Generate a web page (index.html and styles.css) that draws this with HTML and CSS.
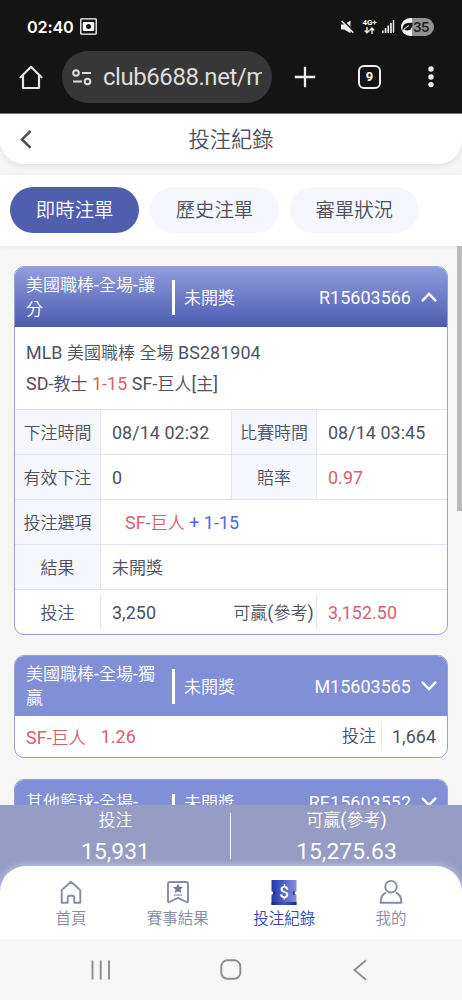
FILE: index.html
```html
<!DOCTYPE html>
<html lang="zh-Hant">
<head>
<meta charset="utf-8">
<title>投注紀錄</title>
<link rel="stylesheet" href="styles.css">
</head>
<body>
<div class="phone">
  <div class="chrome">
    <div class="status">
      <span class="clock">02:40</span>
      <svg class="rec" width="17" height="17" viewBox="0 0 17 17"><rect x=".8" y=".8" width="15.4" height="15.4" rx=".8" fill="none" stroke="#fff" stroke-width="1.3"/><path d="M4 4h9q1.2 0 1.2 1.2v6.6Q14.200 13 13 13H4q-1.200 0-1.200-1.200V5.200Q2.800 4 4 4z" fill="#fff"/><circle cx="8.500" cy="8.500" r="2.500" fill="#141414"/></svg>
      <span class="grow"></span>
      <svg class="mute" width="13" height="14" viewBox="0 0 13 14"><path d="M0 4.500h3.200L9.500.5v12.800L3.200 9.500H0z" fill="#eee"/><path d="M1.800.4l11 10.500" stroke="#141414" stroke-width="1.600"/><path d="M.6 1l11.700 11.700" stroke="#eee" stroke-width="1.600"/></svg>
      <span class="net"><b>4G+</b><svg width="11" height="7" viewBox="0 0 11 7" fill="none" stroke="#eee" stroke-width="1.400"><path d="M3 0v5.700M.7 3.400L3 5.800l2.300-2.400M8 7V1.200M5.700 3.500L8 1.100l2.300 2.400"/></svg></span>
      <svg class="signal" width="13" height="13" viewBox="0 0 13 13" fill="#eee"><path d="M0 10.500h1.700V13H0zM2.700 8h1.700v5H2.700zM5.400 5.500h1.700V13H5.400zM8.100 3h1.700v10H8.100zM10.800 0h1.400v13h-1.400z"/></svg>
      <span class="battery"><svg width="11" height="10" viewBox="0 0 12 10"><path d="M.5 9.500Q0 3 4 1.300 7 0 11.500.5 11.500 8 7 8.600 4 9 2 8z" fill="#141414"/><path d="M.8 9.500Q3 5.500 7.500 3.600" fill="none" stroke="#fff" stroke-width="1"/></svg><b>35</b></span>
    </div>
    <div class="toolbar">
      <svg class="home" width="24" height="25" viewBox="0 0 24 25" fill="none" stroke="#e6e6e6" stroke-width="2.200" stroke-linejoin="round" stroke-linecap="round"><path d="M1.500 12.300L12 1.800l10.500 10.500M4 10.500V23h16V10.500"/></svg>
      <div class="address">
        <svg width="20" height="17" viewBox="0 0 20 17" fill="none" stroke="#ddd" stroke-width="2"><circle cx="4" cy="4" r="2.800"/><path d="M10 4h9M1 12.500h9"/><circle cx="15.500" cy="12.500" r="2.800"/></svg>
        <span>club6688.net/m</span>
      </div>
      <svg class="plus" width="22" height="22" viewBox="0 0 22 22" stroke="#eee" stroke-width="2.300"><path d="M11 .8v20.400M.8 11h20.400"/></svg>
      <span class="count">9</span>
      <svg class="dots" width="6" height="22" viewBox="0 0 6 22" fill="#eee"><circle cx="3" cy="3" r="2.700"/><circle cx="3" cy="11" r="2.700"/><circle cx="3" cy="18.600" r="2.700"/></svg>
    </div>
  </div>

  <header class="title-bar">
    <svg width="12" height="19" viewBox="0 0 12 19" fill="none" stroke="#4a4d5c" stroke-width="2.500"><path d="M10.600 1L2 9.400l8.600 8.500"/></svg>
    <h1>投注紀錄</h1>
  </header>

  <div class="tabs">
    <span class="tab on">即時注單</span><span class="tab">歷史注單</span><span class="tab">審單狀況</span>
  </div>

  <main class="list">
    <section class="card open">
      <div class="head"><div class="game">美國職棒<i>-</i>全場<i>-</i>讓分</div><div class="state">未開獎</div><i class="id">R15603566</i>
        <svg width="16" height="12" viewBox="0 0 16 12" fill="none" stroke="#fff" stroke-width="2.400"><path d="M1 10.200L8 3l7 7.200"/></svg></div>
      <div class="match"><p><i>MLB </i>美國職棒<i> </i>全場<i> BS281904</i></p><p><i>SD-</i>教士<i> <em>1-15</em> SF-</i>巨人<i>[</i>主<i>]</i></p></div>
      <div class="row four"><span class="key">下注時間</span><i class="val">08/14 02:32</i><span class="key">比賽時間</span><i class="val">08/14 03:45</i></div>
      <div class="row four"><span class="key">有效下注</span><i class="val">0</i><span class="key">賠率</span><i class="val red">0.97</i></div>
      <div class="row"><span class="key">投注選項</span><span class="val pick"><em><i>SF-</i>巨人</em><i class="blue"> + 1-15</i></span></div>
      <div class="row"><span class="key">結果</span><span class="val">未開獎</span></div>
      <div class="row four total"><span class="key">投注</span><i class="val">3,250</i><span class="key">可贏<i>(</i>參考<i>)</i></span><i class="val red">3,152.50</i></div>
    </section>

    <section class="card">
      <div class="head"><div class="game">美國職棒<i>-</i>全場<i>-</i>獨贏</div><div class="state">未開獎</div><i class="id">M15603565</i>
        <svg width="16" height="12" viewBox="0 0 16 12" fill="none" stroke="#fff" stroke-width="2.400"><path d="M1 1.800L8 9l7-7.200"/></svg></div>
      <div class="brief"><em><i>SF-</i>巨人</em><i class="odds">1.26</i><span class="stake">投注</span><i class="amount">1,664</i></div>
    </section>

    <section class="card">
      <div class="head single"><div class="game">其他籃球<i>-</i>全場<i>-</i></div><div class="state">未開獎</div><i class="id">RE15603552</i>
        <svg width="16" height="12" viewBox="0 0 16 12" fill="none" stroke="#fff" stroke-width="2.400"><path d="M1 1.800L8 9l7-7.200"/></svg></div>
    </section>
    <div class="scrollbar"></div>
  </main>

  <footer class="bottom">
    <div class="summary">
      <div><span>投注</span><i>15,931</i></div>
      <div><span>可贏<i class="paren">(</i>參考<i class="paren">)</i></span><i>15,275.63</i></div>
    </div>
    <nav class="nav">
      <a><svg width="26" height="26" viewBox="0 0 26 26" fill="none" stroke="#858ca6" stroke-width="1.900" stroke-linejoin="round"><path d="M3.700 11.100L13 2.700l9.300 8.400v12.600h-6v-5q0-2-2-2h-2.600q-2 0-2 2v5h-6z"/></svg>首頁</a>
      <a><svg width="26" height="26" viewBox="0 0 26 26" fill="none" stroke="#858ca6" stroke-width="1.900" stroke-linejoin="round"><path d="M5 3h16q2 0 2 2v17q0 1.700-1.500 1L13 18.800 4.500 23q-1.500.7-1.500-1V5q0-2 2-2z"/><path d="M13 4.500l1.500 3.200 3.600.4-2.600 2.400.7 3.600-3.200-1.800-3.200 1.800.7-3.600-2.600-2.400 3.600-.4z" fill="#747c9c" stroke="none"/><path d="M9 16h8" stroke-width="1.200"/></svg>賽事結果</a>
      <a class="on"><svg width="26" height="26" viewBox="0 0 26 26"><defs><linearGradient id="tk"><stop stop-color="#2437ad"/><stop offset="1" stop-color="#8090dc"/></linearGradient><linearGradient id="edge"><stop stop-color="#17267f"/><stop offset=".5" stop-color="#4258c4"/><stop offset="1" stop-color="#17267f"/></linearGradient></defs><path d="M.5 1h25v11.200a1.800 1.800 0 0 0 0 3.600V26H.5v-10.200a1.800 1.800 0 0 0 0-3.600z" fill="url(#tk)"/><path d="M.5 23h25v3H.5z" fill="url(#edge)"/><path d="M2.500 12.200q2.400 1.800 0 3.600M23.500 12.200q-2.400 1.800 0 3.600" stroke="#17267f" stroke-width="1.300" fill="none"/><text x="13" y="19.200" text-anchor="middle" class="dollar">$</text></svg>投注紀錄</a>
      <a><svg width="26" height="26" viewBox="0 0 26 26" fill="none" stroke="#858ca6" stroke-width="1.900" stroke-linejoin="round"><circle cx="13" cy="7.700" r="5.800"/><path d="M8.200 13.600Q2.600 15.500 2.600 23.800h20.800q0-8.300-5.600-10.200"/></svg>我的</a>
    </nav>
  </footer>

  <div class="system">
    <svg width="20" height="20" viewBox="0 0 20 20" stroke="#8d8d8d" stroke-width="1.900"><path d="M1.500 .5v19M9.700 .5v19M18 .5v19"/></svg>
    <svg class="square" width="22" height="22" viewBox="0 0 22 22" fill="none" stroke="#8d8d8d" stroke-width="1.900"><rect x="1.300" y="1.300" width="19" height="18.500" rx="6"/></svg>
    <svg width="14" height="22" viewBox="0 0 14 22" fill="none" stroke="#8d8d8d" stroke-width="1.900"><path d="M13 1.200L1.400 11 13 20.800"/></svg>
  </div>
</div>
</body>
</html>
```
FILE: styles.css
```css
* { box-sizing: border-box; }
body {
  margin: 0;
  font-family: Roboto, "Noto Sans CJK TC", sans-serif;
  font-size: 17px;
  font-weight: 350;
  color: #4e515e;
}
i, em { font-style: normal; }
i { font-size: 17.9px; font-weight: 380; letter-spacing: .06px; white-space: pre; }
em, .red { color: #d5616f; }
.blue { color: #4d67e5; }
p, h1 { margin: 0; font-weight: inherit; }
svg { display: block; flex: none; }

.phone { width: 462px; height: 1000px; display: flex; flex-direction: column; background: #f6f6f6; overflow: hidden; }

.chrome { flex: none; height: 114px; background: #141414; border-bottom: 1px solid #777; color: #fff; }
.status { display: flex; align-items: center; height: 51px; padding: 2px 28px 0 27px; }
.clock { font: 600 16.3px/20px Inter, sans-serif; letter-spacing: -.2px; width: 46px; white-space: nowrap; }
.rec { margin-left: 7px; }
.grow { flex: 1; }
.mute { margin-right: 2px; }
.net { display: flex; flex-direction: column; align-items: center; width: 15px; margin: 0 5px 0 6px; }
.net b { font: 700 8px/8px Roboto, sans-serif; letter-spacing: -.2px; }
.battery { display: flex; align-items: center; width: 33px; height: 18px; margin-left: 6px; padding-left: 1px; border-radius: 9px; background: linear-gradient(90deg, #f3f3f3 11px, #929292 11px); color: #202020; }
.battery b { font: 600 13.5px/18px Inter, sans-serif; letter-spacing: -.6px; }
.toolbar { display: flex; align-items: center; height: 52px; padding-left: 19px; }
.address { display: flex; align-items: center; width: 210px; height: 52px; margin-left: 19px; padding-left: 10px; border-radius: 26px; background: #373737; color: #ddd; }
.address span { margin-left: 11px; width: 159px; overflow: hidden; font: 400 24px/32px Roboto, sans-serif; letter-spacing: -.45px; white-space: nowrap; }
.plus { margin-left: 22px; }
.count { width: 23px; height: 24px; margin-left: 42px; border: 2px solid #eee; border-radius: 6px; font: 700 13px/20px Roboto, sans-serif; text-align: center; }
.dots { margin-left: 47px; }

.title-bar { flex: none; display: flex; align-items: center; height: 50px; padding-left: 20px; background: #fff; border-radius: 0 0 24px 24px; box-shadow: 0 2px 7px rgba(0, 0, 0, .09); }
.title-bar h1 { flex: 1; margin-right: 32px; padding-top: 2px; font-size: 21.3px; line-height: 30px; text-align: center; }

.tabs { flex: none; display: flex; gap: 10.5px; height: 71px; margin-top: 11px; padding: 12px 10px; background: #fff; box-shadow: 0 1px 5px rgba(0, 0, 0, .07); }
.tab { width: 129.3px; height: 46px; border-radius: 23px; background: #f6f7fd; font-size: 19.4px; line-height: 47px; text-align: center; }
.tab.on { background: #505eae; color: #fff; }

.list { position: relative; flex: none; height: 559px; padding: 20px 14px 0; overflow: hidden; }
.scrollbar { position: absolute; right: 0; top: 0; width: 5px; height: 265px; background: #bababa; }
.card { width: 434px; margin-bottom: 21px; border: 1px solid #99a2cf; border-radius: 10px; background: #fff; overflow: hidden; }
.card.open { margin-bottom: 20px; }
.head { display: flex; align-items: center; height: 60px; padding: 0 10px 0 11px; background: #818fd6; color: #fff; }
.open .head { background: linear-gradient(#929dde, #4b5baf); }
.game { flex: none; width: 146px; padding-right: 12px; line-height: 24.5px; }
.state { flex: none; height: 35px; padding-left: 9px; border-left: 3px solid #fff; line-height: 36px; }
.single { height: 44px; }
.single .state { height: 17px; line-height: 18px; }
.id { flex: 1; text-align: right; margin-right: 10px; }
.match { height: 82px; padding: 10px 11px; }
.match p { height: 31px; line-height: 31px; }

.row { display: grid; grid-template-columns: 86px 1fr; grid-template-rows: 44px; height: 45px; border-top: 1px solid #dfe2f4; line-height: 45px; }
.row.four { grid-template-columns: 86px 130px 86px 1fr; }
.key { height: 44px; background: #f6f7fd; border-right: 1px solid #dfe2f4; line-height: 46px; text-align: center; white-space: nowrap; }
.val { padding-left: 11px; }
span.val { line-height: 46px; }
.four .val + .key { border-left: 1px solid #dfe2f4; }
.pick { padding-left: 24px; }
.total .key { background: none; height: 36px; margin-top: 4px; line-height: 38px; }
.four.total .val + .key { border-left: 0; }

.brief { display: flex; align-items: center; height: 41px; padding: 0 11px 1px; }
.odds { margin-left: 15px; color: #d5616f; }
.stake { margin-left: auto; padding-right: 5px; border-right: 1px solid #dfe2f4; line-height: 30px; }
.amount { margin-left: 10px; }

.bottom { flex: none; background: #959dc4; }
.summary { display: grid; grid-template-columns: 1fr 1fr; height: 61px; color: #fff; }
.summary > div { display: flex; flex-direction: column; align-items: center; }
.summary > div:first-child { background: linear-gradient(#fff, #fff) right 8px / 1px 46px no-repeat; }
.summary span { line-height: 30px; }
.summary div > i { font-size: 22.8px; line-height: 33px; }
.nav { display: grid; grid-template-columns: repeat(4, 106.6px); justify-content: center; height: 73px; padding-top: 13px; background: #fff; border-radius: 26px 26px 0 0; box-shadow: 0 0 9px rgba(255, 255, 255, .5); }
.nav a { display: flex; flex-direction: column; align-items: center; font-size: 15.5px; line-height: 29px; color: #858ca6; }
.nav .on { color: #3148bd; }
.dollar { font: 500 17px Roboto, sans-serif; fill: #fff; }

.system { flex: 1; display: flex; align-items: center; justify-content: space-between; padding: 1px 95px 0 91px; background: #f7f7f7; }
.square { margin-right: 2px; }
```
